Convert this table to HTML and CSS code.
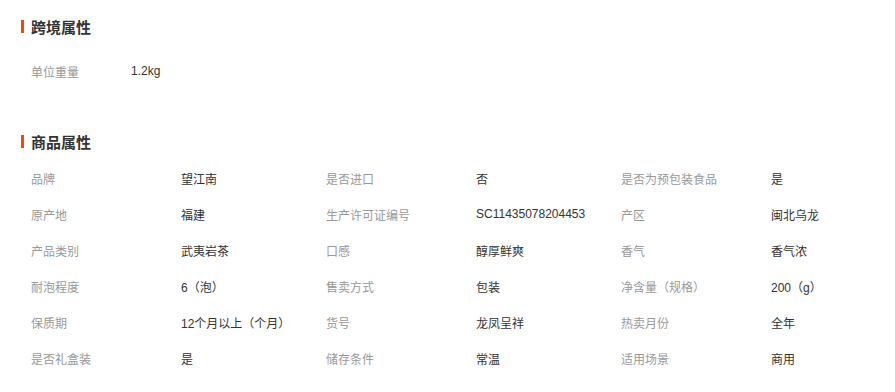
FILE: index.html
```html
<!DOCTYPE html>
<html lang="zh">
<head>
<meta charset="utf-8">
<link rel="stylesheet" href="styles.css">
</head>
<body>
<div class="page">
  <section class="section section-cross">
    <h2 class="title"><span class="bar"></span>跨境属性</h2>
    <div class="grid grid-cross">
      <div class="row"><span class="label">单位重量</span><span class="value">1.2kg</span></div>
    </div>
  </section>
  <section class="section section-goods">
    <h2 class="title"><span class="bar"></span>商品属性</h2>
    <div class="grid">
      <div class="row"><span class="label">品牌</span><span class="value">望江南</span></div>
      <div class="row"><span class="label">是否进口</span><span class="value">否</span></div>
      <div class="row"><span class="label">是否为预包装食品</span><span class="value">是</span></div>
      <div class="row"><span class="label">原产地</span><span class="value">福建</span></div>
      <div class="row"><span class="label">生产许可证编号</span><span class="value">SC11435078204453</span></div>
      <div class="row"><span class="label">产区</span><span class="value">闽北乌龙</span></div>
      <div class="row"><span class="label">产品类别</span><span class="value">武夷岩茶</span></div>
      <div class="row"><span class="label">口感</span><span class="value">醇厚鲜爽</span></div>
      <div class="row"><span class="label">香气</span><span class="value">香气浓</span></div>
      <div class="row"><span class="label">耐泡程度</span><span class="value">6（泡）</span></div>
      <div class="row"><span class="label">售卖方式</span><span class="value">包装</span></div>
      <div class="row"><span class="label">净含量（规格）</span><span class="value">200（g）</span></div>
      <div class="row"><span class="label">保质期</span><span class="value">12个月以上（个月）</span></div>
      <div class="row"><span class="label">货号</span><span class="value">龙凤呈祥</span></div>
      <div class="row"><span class="label">热卖月份</span><span class="value">全年</span></div>
      <div class="row"><span class="label">是否礼盒装</span><span class="value">是</span></div>
      <div class="row"><span class="label">储存条件</span><span class="value">常温</span></div>
      <div class="row"><span class="label">适用场景</span><span class="value">商用</span></div>
    </div>
  </section>
</div>
</body>
</html>
```
FILE: styles.css
```css
html, body {
  margin: 0;
  padding: 0;
  background: #fff;
}
body {
  font-family: "Liberation Sans", "Noto Sans CJK SC", sans-serif;
  font-size: 12px;
  color: #333;
}
.page {
  width: 895px;
  height: 392px;
  overflow: hidden;
}
.section {
  padding-left: 21px;
}
.section-cross {
  padding-top: 16px;
}
.section-goods {
  padding-top: 42px;
}
.title {
  margin: 0;
  height: 20px;
  display: flex;
  align-items: center;
  font-size: 15px;
  font-weight: bold;
  color: #333;
}
.bar {
  width: 3px;
  height: 13px;
  background: #f40;
  margin-right: 7px;
}
.grid {
  display: grid;
  grid-template-columns: repeat(3, 295px);
  padding-left: 10px;
  margin-top: 9px;
}
.grid-cross {
  grid-template-columns: 295px;
  margin-top: 17px;
}
.row {
  display: flex;
  align-items: center;
  height: 36px;
}
.label {
  width: 150px;
  flex: none;
  color: #999;
}
.grid-cross .label {
  width: 100px;
}
.value {
  color: #333;
}
```
